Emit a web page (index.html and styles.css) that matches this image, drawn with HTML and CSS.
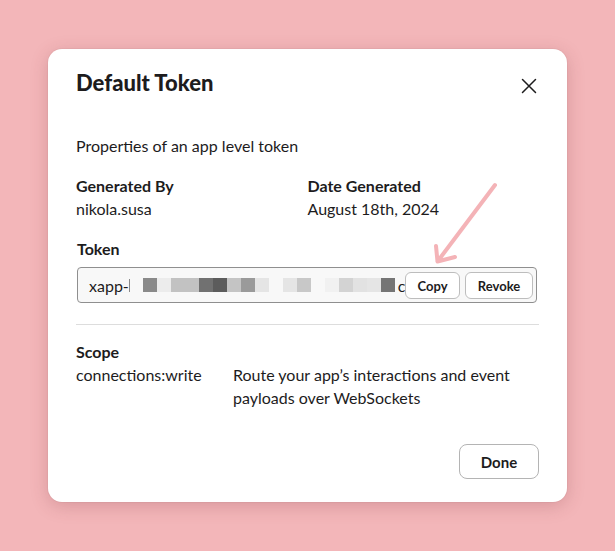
FILE: index.html
```html
<!DOCTYPE html>
<html lang="en">
<head>
<meta charset="utf-8">
<title>Default Token</title>
<link rel="stylesheet" href="styles.css">
</head>
<body>
<div class="modal">
  <div class="header">
    <h1 class="title">Default Token</h1>
    <button class="close" aria-label="Close">
      <svg width="16" height="16" viewBox="0 0 16 16"><path d="M1.5 1.5 L14.5 14.5 M14.5 1.5 L1.5 14.5" stroke="#1d1c1d" stroke-width="1.5" stroke-linecap="round" fill="none"/></svg>
    </button>
  </div>
  <p class="intro">Properties of an app level token</p>
  <div class="meta">
    <div class="meta-item">
      <div class="label">Generated By</div>
      <div class="value">nikola.susa</div>
    </div>
    <div class="meta-item">
      <div class="label">Date Generated</div>
      <div class="value">August 18th, 2024</div>
    </div>
  </div>
  <div class="token-block">
    <div class="label">Token</div>
    <div class="field">
      <span class="token-text">xapp-</span><span class="cursor"></span>
      <span class="pixels">
        <span class="px c1"></span><span class="px c2"></span><span class="px c3"></span><span class="px c3"></span><span class="px c4"></span><span class="px c5"></span><span class="px c6"></span><span class="px c7"></span><span class="px c8"></span><span class="px c0"></span><span class="px c8"></span><span class="px c9"></span><span class="px c0"></span><span class="px c10"></span><span class="px c11"></span><span class="px c12"></span><span class="px c8"></span><span class="px c13"></span>
      </span>
      <span class="token-tail">c</span>
      <div class="field-actions">
        <button class="btn-sm btn-copy">Copy</button>
        <button class="btn-sm btn-revoke">Revoke</button>
      </div>
    </div>
  </div>
  <hr class="divider">
  <div class="scope">
    <div class="label">Scope</div>
    <div class="scope-row">
      <div class="scope-name">connections:write</div>
      <div class="scope-desc">Route your app’s interactions and event payloads over WebSockets</div>
    </div>
  </div>
  <div class="footer">
    <button class="btn-done">Done</button>
  </div>
  <svg class="arrow" width="80" height="90" viewBox="0 0 80 90">
    <path d="M67 6 L9.5 82.5 M9.5 82.5 L8 67 M9.5 82.5 L27 78" stroke="#f4b3b7" stroke-width="4" stroke-linecap="round" stroke-linejoin="round" fill="none"/>
  </svg>
</div>
</body>
</html>
```

FILE: styles.css
```css
* { box-sizing: border-box; }
html, body {
  margin: 0;
  height: 100%;
}
body {
  background: #f3b6b9;
  display: flex;
  align-items: center;
  justify-content: center;
  font-family: Lato, "Noto Sans", sans-serif;
  color: #1d1c1d;
  font-size: 16px;
  line-height: 23px;
}
.modal {
  position: relative;
  width: 519px;
  background: #fff;
  border-radius: 14px;
  padding: 20px 28px 23px;
  box-shadow: 0 4px 18px rgba(120, 40, 50, 0.22), 0 0 0 1px rgba(0, 0, 0, 0.03);
}
.header {
  height: 28px;
  display: flex;
  justify-content: space-between;
  align-items: flex-start;
}
.title {
  margin: 0;
  font-size: 22px;
  line-height: 28px;
  font-weight: 900;
}
.close {
  width: 32px;
  height: 32px;
  margin: 1px -6px 0 0;
  padding: 0;
  border: 0;
  background: transparent;
  display: flex;
  align-items: center;
  justify-content: center;
}
.intro {
  margin: 37px 0 0;
}
.meta {
  margin-top: 17px;
  display: grid;
  grid-template-columns: 1fr 1fr;
}
.label {
  font-weight: 700;
}
.token-block {
  margin: 17px 2px 0 1px;
}
.field {
  position: relative;
  margin-top: 7px;
  height: 36px;
  border: 1px solid #8f8f8f;
  border-radius: 4px;
  background: #f8f8f8;
  display: flex;
  align-items: center;
  padding-left: 11px;
  overflow: hidden;
  white-space: nowrap;
}
.cursor {
  width: 1px;
  height: 13px;
  background: #8a8a8a;
}
.pixels {
  display: flex;
  margin-left: 13px;
}
.px {
  width: 14px;
  height: 14px;
}
.c0 { background: #f8f8f8; }
.c1 { background: #8a8a8a; }
.c2 { background: #ececec; }
.c3 { background: #c2c2c2; }
.c4 { background: #717171; }
.c5 { background: #5c5c5c; }
.c6 { background: #c4c4c4; }
.c7 { background: #9a9a9a; }
.c8 { background: #e5e5e5; }
.c9 { background: #c8c8c8; }
.c10 { background: #f1f1f1; }
.c11 { background: #d3d3d3; }
.c12 { background: #e2e2e2; }
.c13 { background: #757575; }
.token-tail {
  margin-left: 3px;
  color: #1d1c1d;
}
.field-actions {
  position: absolute;
  top: 4px;
  right: 3px;
  display: flex;
  gap: 5px;
}
.btn-sm {
  height: 27px;
  padding: 0;
  background: #fff;
  border: 1px solid #bdbdbd;
  border-radius: 6px;
  font-family: Lato, "Noto Sans", sans-serif;
  font-size: 13px;
  font-weight: 700;
  color: #1d1c1d;
}
.btn-copy { width: 55px; }
.btn-revoke { width: 68px; }
.divider {
  margin: 21px 0 0;
  border: 0;
  border-top: 1px solid #dddddd;
  height: 0;
}
.scope {
  margin-top: 15px;
}
.scope-row {
  display: grid;
  grid-template-columns: 157px 1fr;
}
.scope-desc {
  padding-right: 24px;
}
.footer {
  margin-top: 35px;
  display: flex;
  justify-content: flex-end;
}
.btn-done {
  width: 80px;
  height: 35px;
  background: #fff;
  border: 1px solid #b4b4b4;
  border-radius: 8px;
  font-family: Lato, "Noto Sans", sans-serif;
  font-size: 15px;
  font-weight: 700;
  color: #1d1c1d;
}
.arrow {
  position: absolute;
  left: 380px;
  top: 130px;
}
```
